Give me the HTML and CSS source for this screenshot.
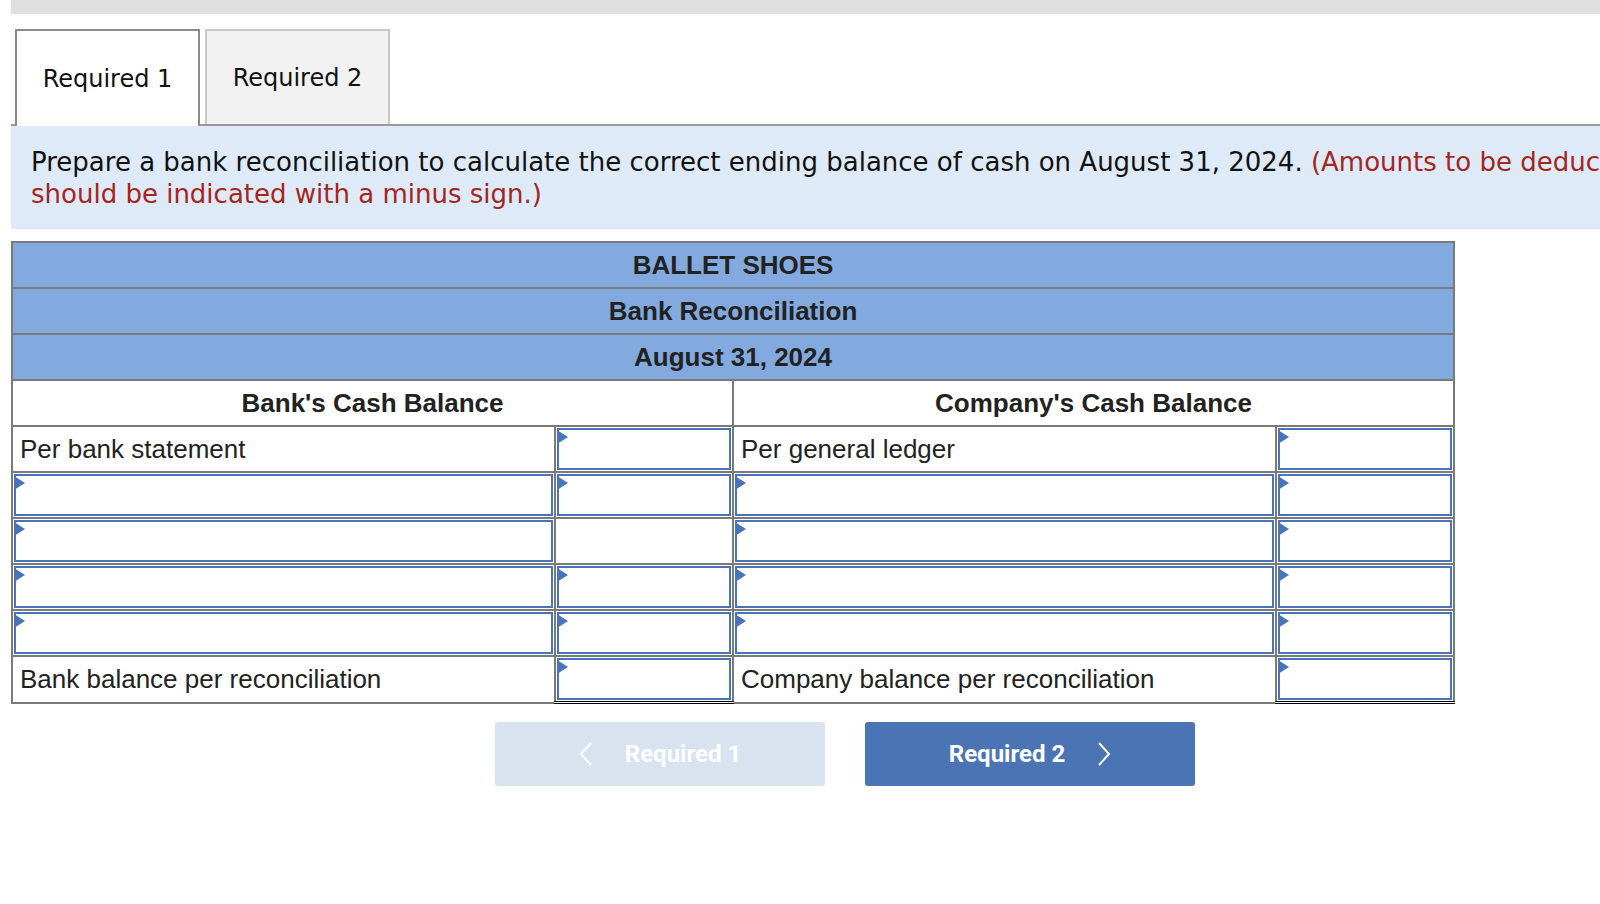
FILE: index.html
```html
<!DOCTYPE html>
<html lang="en">
<head>
  <meta charset="UTF-8" />
  <title>Bank Reconciliation</title>
  <link rel="stylesheet" href="styles.css">
</head>
<body>

  <div class="page">
    <div class="top-bar"></div>

    <div class="tabs">
      <div class="tab active">Required 1</div>
      <div class="tab">Required 2</div>
    </div>

    <div class="instructions">
      Prepare a bank reconciliation to calculate the correct ending balance of cash on August 31, 2024.
      <span class="note">(Amounts to be deducted should be indicated with a minus sign.)</span>
    </div>

    <table class="recon">
      <colgroup>
        <col class="col-label">
        <col class="col-amount">
        <col class="col-label">
        <col class="col-amount">
      </colgroup>
      <tr class="title-row"><th colspan="4">BALLET SHOES</th></tr>
      <tr class="title-row"><th colspan="4">Bank Reconciliation</th></tr>
      <tr class="title-row"><th colspan="4">August 31, 2024</th></tr>
      <tr class="side-row">
        <th colspan="2">Bank's Cash Balance</th>
        <th colspan="2">Company's Cash Balance</th>
      </tr>
      <tr>
        <td class="label">Per bank statement</td>
        <td><div class="entry"><input type="text"></div></td>
        <td class="label">Per general ledger</td>
        <td><div class="entry"><input type="text"></div></td>
      </tr>
      <tr>
        <td><div class="entry"><input type="text"></div></td>
        <td><div class="entry"><input type="text"></div></td>
        <td><div class="entry"><input type="text"></div></td>
        <td><div class="entry"><input type="text"></div></td>
      </tr>
      <tr>
        <td><div class="entry"><input type="text"></div></td>
        <td></td>
        <td><div class="entry"><input type="text"></div></td>
        <td><div class="entry"><input type="text"></div></td>
      </tr>
      <tr>
        <td><div class="entry"><input type="text"></div></td>
        <td><div class="entry"><input type="text"></div></td>
        <td><div class="entry"><input type="text"></div></td>
        <td><div class="entry"><input type="text"></div></td>
      </tr>
      <tr>
        <td><div class="entry"><input type="text"></div></td>
        <td><div class="entry"><input type="text"></div></td>
        <td><div class="entry"><input type="text"></div></td>
        <td><div class="entry"><input type="text"></div></td>
      </tr>
      <tr class="total-row">
        <td class="label">Bank balance per reconciliation</td>
        <td class="total"><div class="entry"><input type="text"></div></td>
        <td class="label">Company balance per reconciliation</td>
        <td class="total"><div class="entry"><input type="text"></div></td>
      </tr>
    </table>

    <div class="nav">
      <button class="nav-btn prev" disabled>
        <svg width="14" height="24" viewBox="0 0 14 24"><polyline points="12,1 2,12 12,23" fill="none" stroke="#fff" stroke-width="2"/></svg>
        <span>Required 1</span>
      </button>
      <button class="nav-btn next">
        <span>Required 2</span>
        <svg width="14" height="24" viewBox="0 0 14 24"><polyline points="2,1 12,12 2,23" fill="none" stroke="#fff" stroke-width="2"/></svg>
      </button>
    </div>
  </div>

</body>
</html>
```

FILE: styles.css
```css
body {
  margin: 0;
  background: #fff;
  overflow: hidden;
  font-family: "DejaVu Sans", Verdana, sans-serif;
}

.page {
  margin-left: 11px;
}

.top-bar {
  height: 14px;
  background: #e0e0e0;
}

.tabs {
  display: flex;
  gap: 5px;
  padding: 15px 0 0 4px;
  border-bottom: 2px solid #999;
}

.tab {
  width: 185px;
  height: 95px;
  box-sizing: border-box;
  display: flex;
  align-items: center;
  justify-content: center;
  font-size: 24px;
  color: #111;
  background: #f2f2f2;
  border: 2px solid #c8c8c8;
  border-bottom: none;
}

.tab.active {
  background: #fff;
  border-color: #8c8c8c;
  height: 97px;
  margin-bottom: -2px;
}

.instructions {
  width: 1740px;
  box-sizing: border-box;
  background: #deeaf7;
  padding: 20px 20px 19px;
  font-size: 26px;
  line-height: 32px;
  color: #111;
}

.note {
  color: #a3261f;
}

.recon {
  margin-top: 12px;
  width: 1443px;
  border-collapse: collapse;
  table-layout: fixed;
  font-family: "Liberation Sans", Arial, sans-serif;
  font-size: 26px;
  color: #222;
}

.col-label { width: 543px; }
.col-amount { width: 178px; }

.recon th,
.recon td {
  border: 2px solid #7a7a7a;
  height: 44px;
  padding: 0;
}

.title-row th {
  background: #82aade;
  text-align: center;
}

.side-row th {
  background: #fff;
}

.recon td.label {
  padding-left: 7px;
}

.entry {
  position: relative;
  height: 44px;
  padding: 1px;
  box-sizing: border-box;
}

.entry::before {
  content: "";
  position: absolute;
  left: 1px;
  top: 3px;
  border-left: 11px solid #4a74b8;
  border-top: 7px solid transparent;
  border-bottom: 7px solid transparent;
}

.entry input {
  display: block;
  width: 100%;
  height: 100%;
  box-sizing: border-box;
  border: 2px solid #4a74b8;
  margin: 0;
  padding: 0;
  background: #fff;
  outline: none;
}

.recon td.total {
  border-top: 2px solid #000;
  border-bottom: 3px double #000;
}

.nav {
  display: flex;
  gap: 40px;
  margin: 18px 0 0 484px;
}

.nav-btn {
  width: 330px;
  height: 64px;
  border: none;
  border-radius: 3px;
  display: flex;
  align-items: center;
  justify-content: center;
  gap: 32px;
  font-family: Roboto, sans-serif;
  font-weight: bold;
  font-size: 24px;
  color: #fff;
  cursor: pointer;
}

.nav-btn.prev {
  background: #d9e3f0;
}

.nav-btn.next {
  background: #4a74b3;
}
```
